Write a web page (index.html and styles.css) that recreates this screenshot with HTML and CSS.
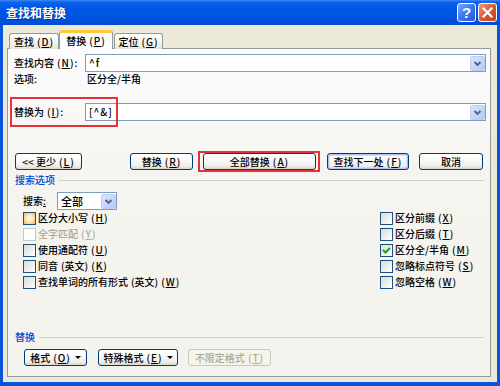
FILE: index.html
```html
<!DOCTYPE html>
<html lang="zh-CN">
<head>
    <meta charset="UTF-8">
    <title>查找和替换</title>
    <link rel="stylesheet" href="styles.css">
</head>
<body>
    <div class="window">
        <div class="titlebar">
            <span class="title">查找和替换</span>
            <span class="tb-btn help">?</span>
            <span class="tb-btn close">
                <svg width="11" height="11" viewBox="0 0 11 11"><path d="M1.5 1.5 L9.5 9.5 M9.5 1.5 L1.5 9.5" stroke="#fff" stroke-width="2.2" stroke-linecap="square"/></svg>
            </span>
        </div>

        <div class="client">
            <div class="tabs">
                <div class="tab tab-find">查找<span class="mn">(<u>D</u>)</span></div>
                <div class="tab active">替换<span class="mn">(<u>P</u>)</span></div>
                <div class="tab tab-goto">定位<span class="mn">(<u>G</u>)</span></div>
            </div>

            <div class="panel">
                <div class="mark-label"></div>

                <div class="field-row">
                    <span class="field-label">查找内容<span class="mn">(<u>N</u>):</span></span>
                    <div class="combo">
                        <span class="combo-text">^f</span>
                        <svg class="drop" width="15" height="15" viewBox="0 0 15 15">
                            <defs>
                                <linearGradient id="dg" x1="0" y1="0" x2="1" y2="1">
                                    <stop offset="0" stop-color="#DCE6FD"/>
                                    <stop offset="1" stop-color="#B3C8F5"/>
                                </linearGradient>
                            </defs>
                            <rect x="0.5" y="0.5" width="14" height="14" rx="1.5" fill="url(#dg)" stroke="#BCCEF8"/>
                            <path d="M4.5 6 L7.5 9 L10.5 6" fill="none" stroke="#4D6185" stroke-width="1.8"/>
                        </svg>
                    </div>
                </div>
                <div class="info-row">
                    <span class="field-label">选项:</span>
                    <span>区分全/半角</span>
                </div>

                <div class="field-row replace-row">
                    <span class="field-label">替换为<span class="mn">(<u>I</u>):</span></span>
                    <div class="combo">
                        <span class="combo-text">[^&amp;]</span>
                        <svg class="drop" width="15" height="15" viewBox="0 0 15 15">
                            <rect x="0.5" y="0.5" width="14" height="14" rx="1.5" fill="url(#dg)" stroke="#BCCEF8"/>
                            <path d="M4.5 6 L7.5 9 L10.5 6" fill="none" stroke="#4D6185" stroke-width="1.8"/>
                        </svg>
                    </div>
                </div>

                <div class="btn-row">
                    <button class="btn btn-less">&lt;&lt; 更少<span class="mn">(<u>L</u>)</span></button>
                    <button class="btn btn-replace">替换<span class="mn">(<u>R</u>)</span></button>
                    <span class="mark-btn">
                        <button class="btn btn-all">全部替换<span class="mn">(<u>A</u>)</span></button>
                    </span>
                    <button class="btn btn-next default">查找下一处<span class="mn">(<u>F</u>)</span></button>
                    <button class="btn btn-cancel">取消</button>
                </div>

                <div class="group-head">
                    <span class="group-title">搜索选项</span>
                    <span class="group-line"></span>
                </div>

                <div class="search-row">
                    <span class="search-label">搜索<u>:</u></span>
                    <div class="select">
                        <span>全部</span>
                        <svg class="drop" width="15" height="15" viewBox="0 0 15 15">
                            <rect x="0.5" y="0.5" width="14" height="14" rx="1.5" fill="url(#dg)" stroke="#BCCEF8"/>
                            <path d="M4.5 6 L7.5 9 L10.5 6" fill="none" stroke="#4D6185" stroke-width="1.8"/>
                        </svg>
                    </div>
                </div>

                <div class="checks">
                    <div class="check-col">
                        <div class="check-row"><span class="box hot"></span>区分大小写<span class="mn">(<u>H</u>)</span></div>
                        <div class="check-row disabled"><span class="box"></span>全字匹配<span class="mn">(<u>Y</u>)</span></div>
                        <div class="check-row"><span class="box"></span>使用通配符<span class="mn">(<u>U</u>)</span></div>
                        <div class="check-row"><span class="box"></span>同音<span class="paren">(英文)</span><span class="mn">(<u>K</u>)</span></div>
                        <div class="check-row"><span class="box"></span>查找单词的所有形式<span class="paren">(英文)</span><span class="mn">(<u>W</u>)</span></div>
                    </div>
                    <div class="check-col">
                        <div class="check-row"><span class="box"></span>区分前缀<span class="mn">(<u>X</u>)</span></div>
                        <div class="check-row"><span class="box"></span>区分后缀<span class="mn">(<u>T</u>)</span></div>
                        <div class="check-row">
                            <span class="box">
                                <svg width="11" height="11" viewBox="0 0 11 11"><path d="M2 5 L4.5 7.5 L9 3" fill="none" stroke="#21A121" stroke-width="2"/></svg>
                            </span>区分全/半角<span class="mn">(<u>M</u>)</span>
                        </div>
                        <div class="check-row"><span class="box"></span>忽略标点符号<span class="mn">(<u>S</u>)</span></div>
                        <div class="check-row"><span class="box"></span>忽略空格<span class="mn">(<u>W</u>)</span></div>
                    </div>
                </div>

                <div class="bottom-group">
                    <div class="group-head">
                        <span class="group-title">替换</span>
                        <span class="group-line"></span>
                    </div>
                    <div class="btn-row bottom-row">
                        <button class="btn btn-format">格式<span class="mn">(<u>O</u>)</span><span class="tri"></span></button>
                        <button class="btn btn-special">特殊格式<span class="mn">(<u>E</u>)</span><span class="tri"></span></button>
                        <button class="btn btn-noformat" disabled>不限定格式<span class="mn">(<u>T</u>)</span></button>
                    </div>
                </div>
            </div>
        </div>
    </div>
</body>
</html>
```

FILE: styles.css
```css
* {
    box-sizing: border-box;
}

body {
    margin: 0;
    font-family: "Noto Sans CJK SC", "Liberation Sans", sans-serif;
    font-size: 10px;
    font-weight: 500;
    line-height: 14px;
    color: #000;
}

u {
    text-decoration: underline;
    text-underline-offset: 1px;
}

/* mnemonic "(X)" parts: wider, spaced like the old bitmap font */
.mn {
    margin-left: 3px;
    letter-spacing: 1px;
}

.paren {
    margin-left: 3px;
}

.window {
    width: 500px;
    height: 386px;
    background: #0B55DD;
    display: flex;
    flex-direction: column;
    overflow: hidden;
}

/* title bar */
.titlebar {
    height: 25px;
    flex: none;
    display: flex;
    align-items: center;
    padding: 0 3px 0 6px;
    background: linear-gradient(#3D8CF8 0, #0F62EC 2px, #0058E6 7px, #0055E3 17px, #004BD3 25px);
}

.title {
    flex: 1;
    color: #fff;
    font-weight: bold;
    font-size: 12px;
    text-shadow: 1px 1px 0 #0A2A8A;
}

.tb-btn {
    width: 19px;
    height: 19px;
    border: 1px solid #fff;
    border-radius: 3px;
    display: flex;
    align-items: center;
    justify-content: center;
}

.help {
    margin-right: 2px;
    background: linear-gradient(135deg, #7DAAFF, #3A77EE 50%, #2458D8);
    color: #fff;
    font-family: "Liberation Sans", sans-serif;
    font-weight: bold;
    font-size: 15px;
}

.close {
    background: linear-gradient(135deg, #F09A78, #E0582E 50%, #C73E1C);
}

/* client area */
.client {
    flex: 1;
    margin: 0 3px 4px;
    padding: 6px 6px 5px 4px;
    background: #ECE9D8;
    display: flex;
    flex-direction: column;
}

.tabs {
    height: 18px;
    display: flex;
    align-items: flex-end;
    padding-left: 2px;
    margin-bottom: -1px;
    position: relative;
    z-index: 1;
}

.tab {
    height: 16px;
    border: 1px solid #919B9C;
    border-bottom: none;
    border-radius: 3px 3px 0 0;
    background: linear-gradient(#FFFFFF, #F3F2EC 60%, #E6E4DA);
    display: flex;
    align-items: center;
    justify-content: center;
}

.tab-find {
    width: 50px;
}

.tab.active {
    width: 54px;
    height: 19px;
    border-top: 3px solid #FFC83C;
    background: #FCFCFE;
    margin: 0 1px 0 0;
}

.tab-goto {
    width: 49px;
}

.panel {
    flex: 1;
    position: relative;
    border: 1px solid #919B9C;
    background: linear-gradient(#FCFCFE, #F5F4EF 40%, #F3F2EC);
    display: flex;
    flex-direction: column;
    padding-bottom: 10px;
}

/* red annotation boxes */
.mark-label {
    position: absolute;
    left: 2px;
    top: 48px;
    width: 108px;
    height: 30px;
    border: 2px solid #E6313A;
    z-index: 2;
}

.mark-btn {
    display: flex;
    align-items: center;
    height: 21px;
    padding: 0 2px 0 3px;
    margin-left: 5px;
    border: 2px solid #E6313A;
}

/* rows */
.field-row {
    height: 18px;
    margin-top: 5px;
    display: flex;
    align-items: center;
    padding: 0 4px 0 6px;
}

.field-label {
    width: 71px;
    flex: none;
    white-space: nowrap;
}

.combo {
    flex: 1;
    height: 18px;
    border: 1px solid #7F9DB9;
    background: #fff;
    display: flex;
    align-items: center;
    padding: 0 0 0 3px;
}

.combo-text {
    flex: 1;
    letter-spacing: 1px;
}

.drop {
    display: block;
    flex: none;
}

.info-row {
    height: 14px;
    display: flex;
    align-items: center;
    padding-left: 6px;
}

.info-row .field-label {
    width: 73px;
}

.replace-row {
    margin-top: 17px;
}

.btn-row {
    display: flex;
    align-items: center;
    height: 21px;
    margin-top: 30px;
}

.btn {
    height: 17px;
    padding: 0;
    border: 1px solid #003C74;
    border-radius: 3px;
    background: linear-gradient(#FFFFFF 0, #FAFAF8 35%, #EFEEE9 80%, #D9D5CB 100%);
    font-family: inherit;
    font-size: 10px;
    font-weight: 500;
    line-height: 14px;
    color: #000;
    display: flex;
    align-items: center;
    justify-content: center;
}

.btn-less {
    width: 67px;
    margin-left: 7px;
}

.btn-replace {
    width: 63px;
    margin-left: 48px;
}

.btn-all {
    width: 113px;
}

.btn-next {
    width: 82px;
    margin-left: 7px;
}

.btn.default {
    box-shadow: inset 0 0 0 1px #A8C4F2, inset 0 0 0 2px #CFDFFA;
}

.btn-cancel {
    width: 64px;
    margin-left: 10px;
}

/* groups */
.group-head {
    height: 14px;
    margin-top: 1px;
    display: flex;
    align-items: center;
    padding: 0 6px 0 7px;
}

.group-title {
    color: #0046D5;
}

.group-line {
    flex: 1;
    height: 1px;
    margin-left: 4px;
    margin-top: 1px;
    background: #D0CFC4;
}

.search-row {
    height: 18px;
    margin-top: 5px;
    display: flex;
    align-items: center;
    padding-left: 15px;
}

.search-label {
    width: 34px;
}

.select {
    width: 60px;
    height: 18px;
    border: 1px solid #7F9DB9;
    background: #fff;
    display: flex;
    align-items: center;
    justify-content: space-between;
    padding-left: 3px;
    font-size: 11px;
}

.checks {
    display: grid;
    grid-template-columns: 357px 1fr;
    padding-left: 15px;
}

.check-row {
    height: 16px;
    display: flex;
    align-items: center;
    white-space: nowrap;
}

.box {
    width: 13px;
    height: 13px;
    flex: none;
    margin-right: 2px;
    border: 1px solid #1C5180;
    background: linear-gradient(135deg, #DCDCD7, #F4F4F0 70%, #FFFFFF);
    display: flex;
    align-items: center;
    justify-content: center;
}

.box.hot {
    background: radial-gradient(circle, #FFF3D6 25%, #FBD08A 70%, #F5A94A);
}

.check-row.disabled {
    color: #ACA899;
}

.check-row.disabled .box {
    border-color: #CAC8BB;
    background: #FFFFFF;
}

.bottom-group {
    margin-top: auto;
}

.bottom-row {
    height: 17px;
    margin-top: 5px;
}

.btn-format {
    width: 63px;
    margin-left: 16px;
}

.btn-special {
    width: 80px;
    margin-left: 11px;
}

.btn-noformat {
    width: 83px;
    margin-left: 10px;
    border-color: #C9C7BA;
    background: #F5F4EA;
    color: #ACA899;
}

.tri {
    width: 0;
    height: 0;
    margin-left: 4px;
    border-left: 3px solid transparent;
    border-right: 3px solid transparent;
    border-top: 3px solid #000;
}
```
